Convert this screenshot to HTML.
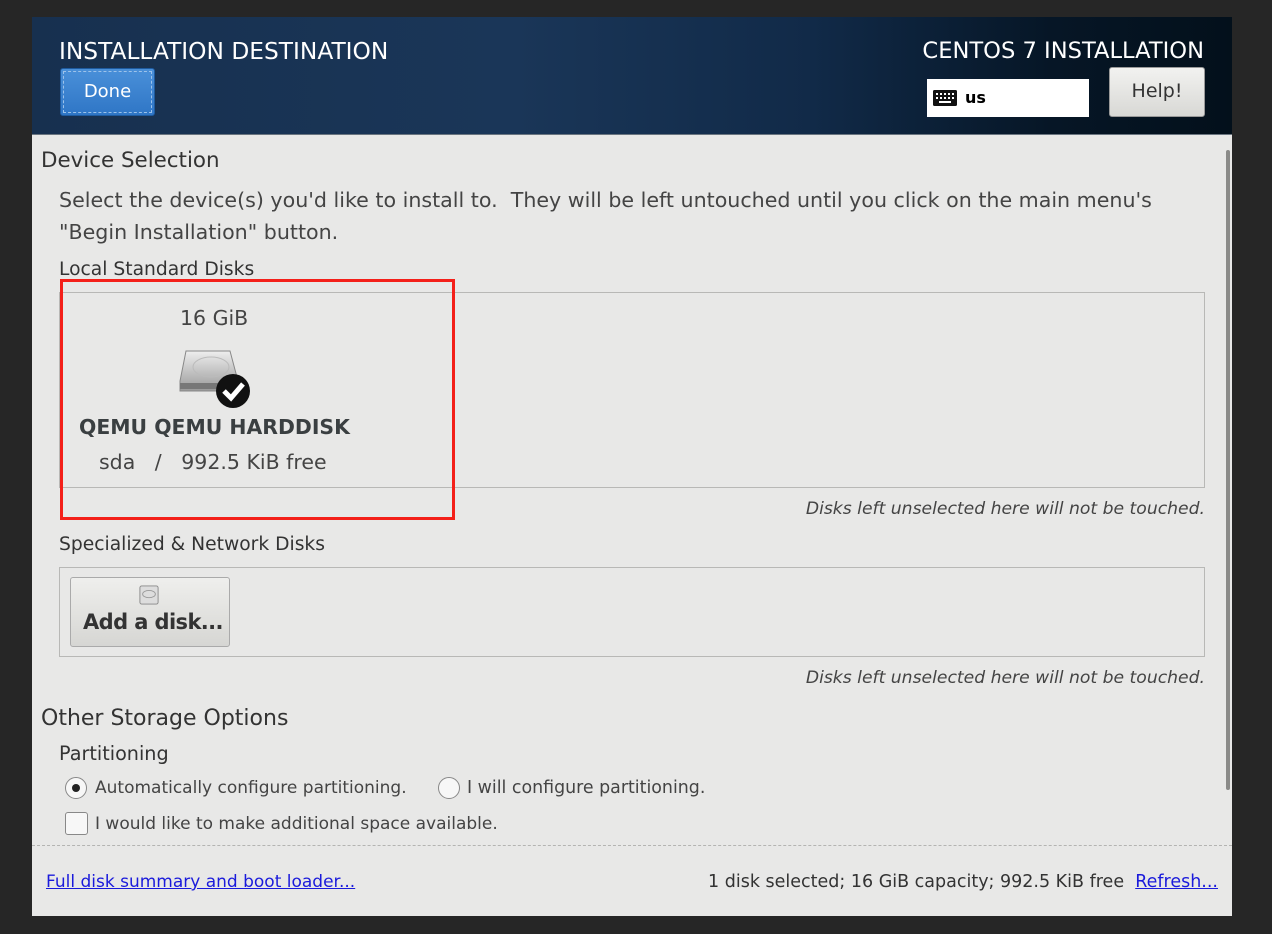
<!DOCTYPE html>
<html><head><meta charset="utf-8"><style>
*{margin:0;padding:0;box-sizing:border-box}
body{width:1272px;height:934px;background:#262626;font-family:"DejaVu Sans","Liberation Sans",sans-serif;color:#2e3436;position:relative;overflow:hidden}
.win{position:absolute;left:32px;top:17px;width:1200px;height:899px;background:#e8e8e7}
.hdr{position:absolute;left:0;top:0;width:1200px;height:118px;background:linear-gradient(90deg,#17304f 0%,#1a3658 40%,#112a48 65%,#061626 85%,#03101b 100%);border-bottom:1px solid #6a7580}
.a{position:absolute;white-space:nowrap}
.t{font-size:20.6px}
</style></head><body>
<div class="win">
 <div class="hdr">
  <div class="a" style="left:27px;top:21px;color:#fff;font-size:23.3px">INSTALLATION DESTINATION</div>
  <div class="a" style="left:28px;top:51px;width:95px;height:48px;background:linear-gradient(#4a90d9,#2f76c6);border:1px solid #1e5a9e;border-radius:3px;color:#fff;font-size:18px;text-align:center;line-height:46px;outline:1px dashed #9cc2ea;outline-offset:-4px">Done</div>
  <div class="a" style="right:28px;top:21px;color:#fff;font-size:22.6px">CENTOS 7 INSTALLATION</div>
  <div class="a" style="left:895px;top:62px;width:162px;height:38px;background:#fff;font-size:16px;font-weight:bold;color:#000;line-height:38px;padding-left:38px">us
   <svg style="position:absolute;left:6px;top:11px" width="24" height="16" viewBox="0 0 24 16"><rect width="24" height="16" rx="1.5" fill="#111"/><g fill="#fff"><rect x="3" y="3" width="2" height="2"/><rect x="7" y="3" width="2" height="2"/><rect x="11" y="3" width="2" height="2"/><rect x="15" y="3" width="2" height="2"/><rect x="19" y="3" width="2" height="2"/><rect x="3" y="7" width="2" height="2"/><rect x="7" y="7" width="2" height="2"/><rect x="11" y="7" width="2" height="2"/><rect x="15" y="7" width="2" height="2"/><rect x="19" y="7" width="2" height="2"/><rect x="6" y="11" width="12" height="2"/></g></svg></div>
  <div class="a" style="left:1077px;top:50px;width:96px;height:50px;background:linear-gradient(#f2f2f0,#d8d8d5);border:1px solid #999;border-radius:3px;font-size:19px;text-align:center;line-height:46px;color:#333">Help!</div>
 </div>
 <div class="a" style="left:1194px;top:133px;width:4px;height:640px;background:#8a8a88;border-radius:2px"></div>
 <div class="a" style="left:9px;top:131px;font-size:21.4px;color:#333">Device Selection</div>
 <div class="a t" style="left:27px;top:171px;color:#444">Select the device(s) you'd like to install to.&nbsp; They will be left untouched until you click on the main menu's</div>
 <div class="a t" style="left:27px;top:203px;color:#444">"Begin Installation" button.</div>
 <div class="a" style="left:27px;top:242px;font-size:18.7px;color:#333">Local Standard Disks</div>
 <div class="a" style="left:27px;top:275px;width:1146px;height:196px;border:1px solid #b8b8b6"></div>
 <div class="a" style="left:148px;top:289px;font-size:20.5px;color:#444">16 GiB</div>
 <svg class="a" style="left:146px;top:330px" width="74" height="62" viewBox="0 0 74 62"><defs><linearGradient id="g" x1="0" y1="0" x2="0" y2="1"><stop offset="0" stop-color="#eee"/><stop offset="1" stop-color="#999"/></linearGradient></defs><path d="M8 4 H52 L60 34 V44 H2 V34 Z" fill="url(#g)" stroke="#888"/><ellipse cx="33" cy="20" rx="18" ry="10" fill="none" stroke="#bbb"/><rect x="2" y="36" width="58" height="6" fill="#777"/><circle cx="55" cy="44" r="17" fill="#111"/><path d="M46 44 L53 51 L65 37" stroke="#fff" stroke-width="5" fill="none"/></svg>
 <div class="a" style="left:47px;top:398px;font-size:20.4px;font-weight:bold;color:#3a3f41">QEMU QEMU HARDDISK</div>
 <div class="a" style="left:67px;top:433px;font-size:20.5px;color:#444">sda &nbsp;&nbsp;/ &nbsp;&nbsp;992.5 KiB free</div>
 <div class="a" style="left:28px;top:262px;width:395px;height:241px;border:3px solid #f4201a"></div>
 <div class="a" style="right:27px;top:482px;font-size:17.2px;font-style:italic;color:#444">Disks left unselected here will not be touched.</div>
 <div class="a" style="left:27px;top:517px;font-size:18.7px;color:#333">Specialized &amp; Network Disks</div>
 <div class="a" style="left:27px;top:550px;width:1146px;height:90px;border:1px solid #b8b8b6"></div>
 <div class="a" style="left:38px;top:560px;width:160px;height:70px;background:linear-gradient(#efefed,#d6d6d3);border:1px solid #aaa;border-radius:3px"></div>
 <svg class="a" style="left:107px;top:568px" width="20" height="20" viewBox="0 0 22 22"><rect x="1" y="1" width="20" height="20" rx="2" fill="#ddd" stroke="#888"/><ellipse cx="11" cy="10" rx="7" ry="4" fill="none" stroke="#999"/></svg>
 <div class="a" style="left:51px;top:593px;font-size:21px;font-weight:bold;color:#333;letter-spacing:-0.6px">Add a disk...</div>
 <div class="a" style="right:27px;top:651px;font-size:17.2px;font-style:italic;color:#444">Disks left unselected here will not be touched.</div>
 <div class="a" style="left:9px;top:689px;font-size:22px;color:#333">Other Storage Options</div>
 <div class="a" style="left:27px;top:725px;font-size:19.2px;color:#333">Partitioning</div>
 <div class="a" style="left:33px;top:760px;width:22px;height:22px;border:1px solid #888;border-radius:50%;background:#f7f7f7"><div style="position:absolute;left:6px;top:6px;width:8px;height:8px;border-radius:50%;background:#222"></div></div>
 <div class="a" style="left:63px;top:761px;font-size:17px;color:#444">Automatically configure partitioning.</div>
 <div class="a" style="left:406px;top:760px;width:22px;height:22px;border:1px solid #888;border-radius:50%;background:#f7f7f7"></div>
 <div class="a" style="left:435px;top:761px;font-size:17.4px;color:#444">I will configure partitioning.</div>
 <div class="a" style="left:33px;top:795px;width:23px;height:23px;border:1px solid #888;border-radius:3px;background:#f7f7f7"></div>
 <div class="a" style="left:63px;top:797px;font-size:17px;color:#444">I would like to make additional space available.</div>
 <div class="a" style="left:0;top:828px;width:1200px;border-top:1px dashed #b4b4b2"></div>
 <div class="a" style="left:14px;top:855px;font-size:17px;color:#1a1adb;text-decoration:underline">Full disk summary and boot loader...</div>
 <div class="a" style="right:14px;top:855px;font-size:17.5px;color:#333">1 disk selected; 16 GiB capacity; 992.5 KiB free &nbsp;<span style="color:#1a1adb;text-decoration:underline">Refresh...</span></div>
</div>
</body></html>
